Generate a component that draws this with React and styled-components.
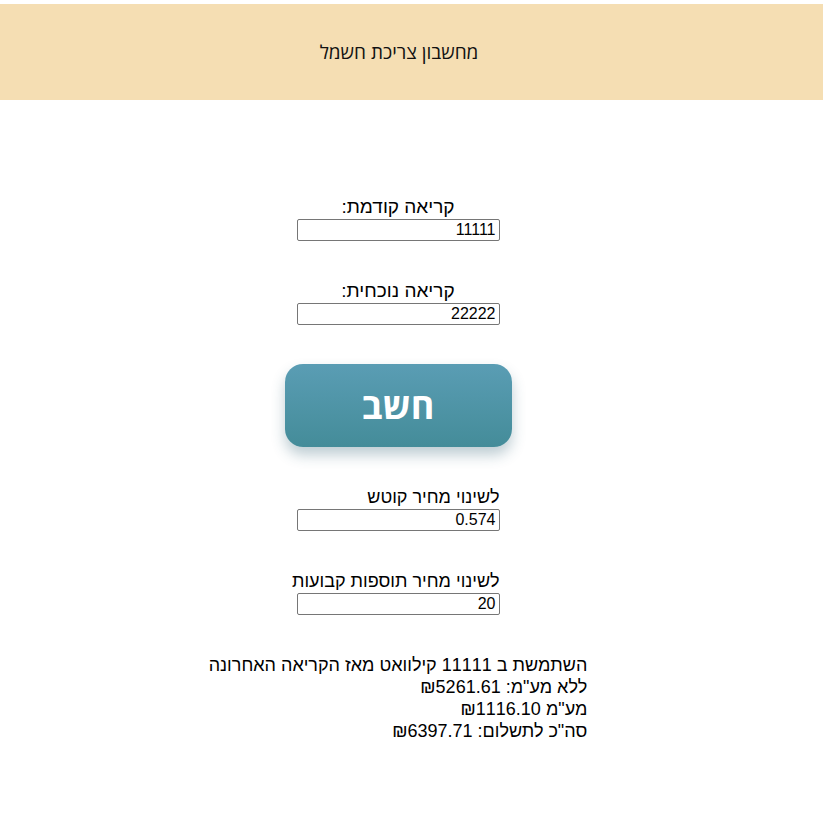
import React, { useState } from "react";
import styled, { createGlobalStyle } from "styled-components";

const GlobalStyle = createGlobalStyle`
  body {
    margin: 4px 0 0;
    background: #ffffff;
    font-family: "Liberation Sans", Arial, sans-serif;
    direction: rtl;
  }
`;

// ---------------- Styled Components ---------------- //

const Header = styled.header`
  height: 96px;
  background: #f5deb3;
  display: flex;
  align-items: center;
  justify-content: center;
  padding-right: 25px;
  font-family: "Open Sans", "DejaVu Sans", sans-serif;
  font-size: 19px;
  color: #111;
`;

const Main = styled.main`
  display: flex;
  flex-direction: column;
  align-items: center;
  gap: 39px;
  padding: 96px 27px 40px 0;
`;

const Field = styled.div`
  width: 203px;
  display: flex;
  flex-direction: column;
  align-items: ${({ $center }) => ($center ? "center" : "flex-start")};
`;

const Label = styled.label`
  font-size: ${({ $size }) => $size || 18}px;
  line-height: 22px;
  white-space: nowrap;
  color: #000;
`;

const NumberInput = styled.input`
  box-sizing: border-box;
  width: 203px;
  height: 22px;
  margin: 1px 0 0;
  padding: 1px 3px;
  border: 1px solid #767676;
  border-radius: 2px;
  font-family: "Liberation Sans", Arial, sans-serif;
  font-size: 16px;
  text-align: right;
  direction: ltr;
  color: #000;
  background: #fff;
`;

const CalcButton = styled.button`
  width: 227px;
  height: 83px;
  border: none;
  border-radius: 18px;
  background: linear-gradient(to bottom, #5a9db4, #448c99);
  box-shadow: 0 8px 14px rgba(40, 90, 110, 0.3);
  color: #fff;
  font-family: "Open Sans", "DejaVu Sans", sans-serif;
  font-size: 36px;
  font-weight: 700;
  cursor: pointer;
`;

const Results = styled.div`
  font-size: 18px;
  line-height: 22px;
  color: #000;
  text-align: right;
`;

const ResultLine = styled.div`
  white-space: pre;
`;

// ---------------- Main Component ---------------- //

const App = () => {
  const [prev, setPrev] = useState("11111");
  const [curr, setCurr] = useState("22222");
  const [kwh, setKwh] = useState("0.574");
  const [fixed, setFixed] = useState("20");

  const used = Number(curr) - Number(prev);
  const gross = used * Number(kwh);
  const vat = gross * 0.175;
  const net = gross - vat;
  const total = gross + Number(fixed);

  const lines = [
    `השתמשת ב ${used} קילוואט מאז הקריאה האחרונה`,
    `ללא מע"מ: ₪${net.toFixed(2)}`,
    `מע"מ ₪${vat.toFixed(2)}`,
    `סה"כ לתשלום: ₪${total.toFixed(2)}`,
  ];

  return (
    <>
      <GlobalStyle />
      <Header>מחשבון צריכת חשמל</Header>
      <Main>
        <Field $center>
          <Label $size={19}>קריאה קודמת:</Label>
          <NumberInput value={prev} onChange={(e) => setPrev(e.target.value)} />
        </Field>
        <Field $center>
          <Label $size={19}>קריאה נוכחית:</Label>
          <NumberInput value={curr} onChange={(e) => setCurr(e.target.value)} />
        </Field>
        <CalcButton>חשב</CalcButton>
        <Field>
          <Label>לשינוי מחיר קוטש</Label>
          <NumberInput value={kwh} onChange={(e) => setKwh(e.target.value)} />
        </Field>
        <Field>
          <Label>לשינוי מחיר תוספות קבועות</Label>
          <NumberInput value={fixed} onChange={(e) => setFixed(e.target.value)} />
        </Field>
        <Results>
          {lines.map((line, i) => (
            <ResultLine key={i}>{line}</ResultLine>
          ))}
        </Results>
      </Main>
    </>
  );
};

export default App;
